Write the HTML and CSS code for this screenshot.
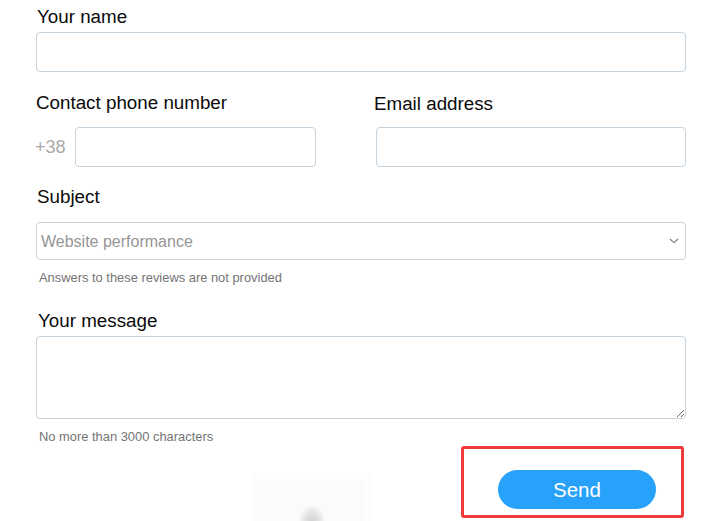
FILE: index.html
```html
<!DOCTYPE html>
<html lang="en">
<head>
<meta charset="utf-8">
<title>Feedback form</title>
<link rel="stylesheet" href="styles.css">
</head>
<body>
<form class="form">
  <label class="label label-name">Your name</label>
  <input class="field field-name" type="text">

  <div class="two-col">
    <div class="col">
      <label class="label label-row">Contact phone number</label>
      <div class="phone">
        <span class="prefix">+38</span>
        <input class="field field-phone" type="text">
      </div>
    </div>
    <div class="col col-email">
      <label class="label label-row">Email address</label>
      <input class="field field-email" type="email">
    </div>
  </div>

  <label class="label label-subject">Subject</label>
  <div class="select-wrap">
    <select class="select">
      <option>Website performance</option>
    </select>
    <svg class="chevron" width="10" height="6" viewBox="0 0 10 6"><path d="M1 1 L5 4.6 L9 1" fill="none" stroke="#777" stroke-width="1.1"/></svg>
  </div>
  <p class="hint hint-subject">Answers to these reviews are not provided</p>

  <label class="label label-message">Your message</label>
  <textarea class="field message"></textarea>
  <p class="hint hint-message">No more than 3000 characters</p>

  <div class="footer">
    <div class="captcha"><div class="captcha-inner"><div class="blob"></div></div></div>
    <div class="send-box">
      <button class="send" type="button">Send</button>
    </div>
  </div>
</form>
</body>
</html>
```

FILE: styles.css
```css
* { box-sizing: border-box; }
html, body { margin: 0; padding: 0; background: #fff; }
body {
  font-family: "Liberation Sans", Arial, sans-serif;
  color: #000;
  overflow: hidden;
}
.form {
  width: 650px;
  margin-left: 36px;
  display: flex;
  flex-direction: column;
}
.label {
  display: block;
  font-size: 18.8px;
  line-height: 21px;
  color: #0a0a0a;
}
.label-name { margin-top: 6px; margin-left: 1px; }
.field {
  display: block;
  border: 1px solid #c6d2dc;
  border-radius: 4px;
  background: #fff;
  font-family: inherit;
  outline: none;
}
.field-name { height: 40px; width: 650px; margin-top: 5px; }

.two-col {
  display: grid;
  grid-template-columns: 280px 310px;
  column-gap: 60px;
  margin-top: 20px;
}
.label-row { height: 21px; }
.col-email .label-row { margin-left: -2px; margin-top: 1px; height: 20px; }
.phone {
  display: flex;
  align-items: center;
  margin-top: 14px;
  margin-left: -1px;
}
.prefix {
  width: 40px;
  font-size: 18px;
  color: #aaaaaa;
}
.field-phone { width: 241px; height: 40px; }
.field-email { width: 310px; height: 40px; margin-top: 14px; }

.label-subject { margin-top: 19px; margin-left: 1px; }
.select-wrap {
  position: relative;
  margin-top: 15px;
}
.select {
  display: block;
  width: 650px;
  height: 38px;
  -webkit-appearance: none;
  appearance: none;
  border: 1px solid #c6d2dc;
  border-radius: 4px;
  background: #fff;
  padding: 0 0 0 4px;
  font-family: "Liberation Sans", Arial, sans-serif;
  font-size: 16px;
  color: #959595;
  outline: none;
}
.chevron {
  position: absolute;
  right: 7px;
  top: 16px;
}
.hint {
  margin: 0;
  font-size: 12.9px;
  line-height: 14px;
  color: #747474;
  margin-left: 3px;
}
.hint-subject { margin-top: 11px; }
.label-message { margin-top: 25px; margin-left: 2px; }
.message {
  width: 650px;
  height: 83px;
  margin-top: 5px;
  resize: both;
}
.hint-message { margin-top: 11px; }

.footer {
  display: flex;
  align-items: flex-start;
  margin-top: 2px;
  height: 80px;
}
.captcha {
  margin-left: 217px;
  margin-top: 27px;
  width: 120px;
  height: 60px;
  background: #fdfdfd;
  padding: 8px 10px 0;
}
.captcha-inner {
  width: 100px;
  height: 52px;
  background: #fbfbfa;
  position: relative;
  overflow: hidden;
}
.blob {
  position: absolute;
  left: 36px;
  top: 24px;
  width: 26px;
  height: 36px;
  border-radius: 50%;
  background: radial-gradient(ellipse at center, #cfcfcf 0%, #e6e6e6 45%, rgba(250,250,250,0) 75%);
}
.send-box {
  margin-left: auto;
  margin-right: 2px;
  width: 223px;
  height: 72px;
  border: 3px solid #ee3a3a;
  border-radius: 3px;
  padding: 21px 0 0 34px;
}
.send {
  display: block;
  width: 158px;
  height: 39px;
  border: none;
  border-radius: 20px;
  background: #28a1fb;
  color: #fff;
  font-family: "Liberation Sans", Arial, sans-serif;
  font-size: 20.5px;
  padding: 0;
  cursor: pointer;
}
```
